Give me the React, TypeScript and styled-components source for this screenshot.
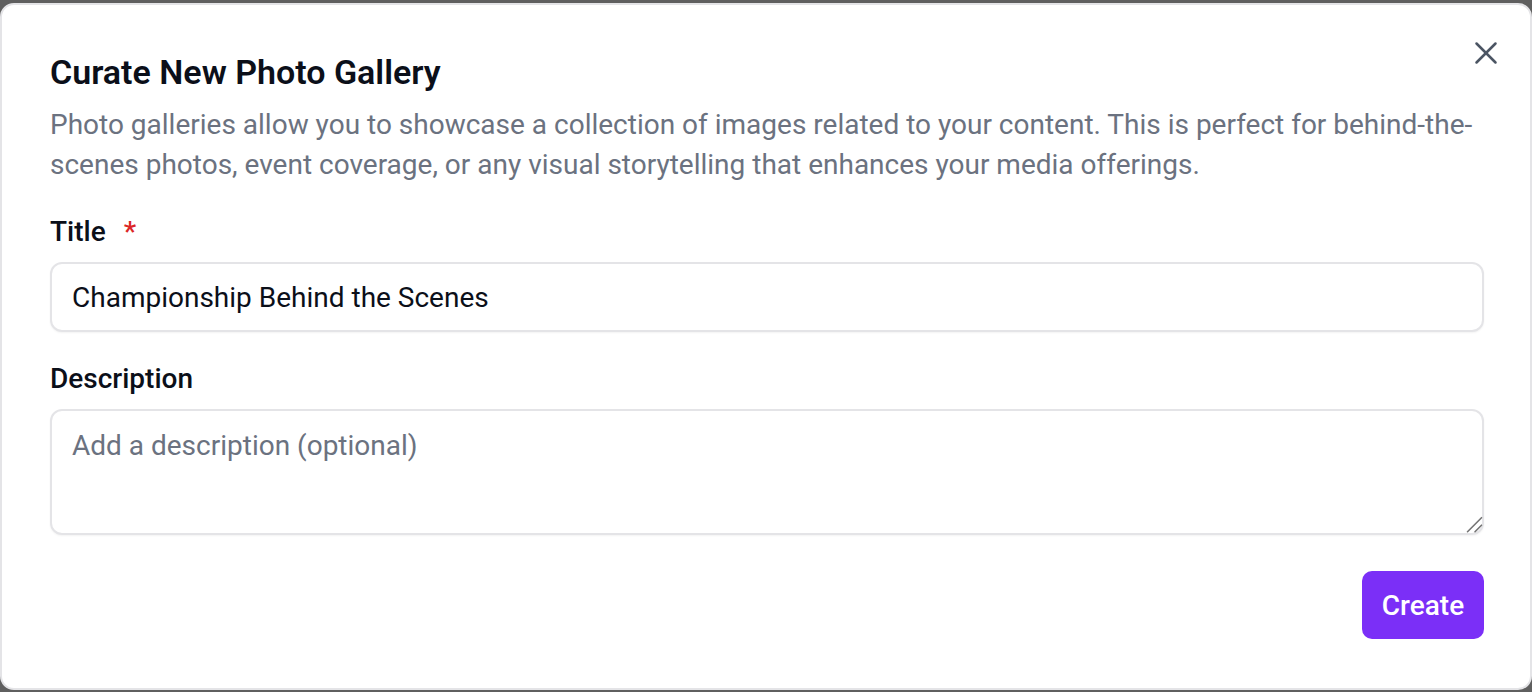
import React from "react";
import styled, { createGlobalStyle } from "styled-components";

const Global = createGlobalStyle`
  html, body { margin: 0; padding: 0; background: #5f5f5f; }
  body { font-family: Roboto, "Noto Sans", "Liberation Sans", sans-serif; }
  * { box-sizing: border-box; }
`;

const Backdrop = styled.div`
  width: 1532px;
  height: 692px;
  padding-top: 3px;
  overflow: hidden;
  background: #5f5f5f;
`;

const Dialog = styled.div`
  position: relative;
  width: 1532px;
  height: 687px;
  background: #ffffff;
  border: 2px solid #e4e4e7;
  border-radius: 14px;
  padding: 49px 46px 46px 48px;
  display: flex;
  flex-direction: column;
`;

const CloseButton = styled.button`
  position: absolute;
  top: 28px;
  right: 24px;
  width: 40px;
  height: 40px;
  padding: 0;
  border: none;
  background: transparent;
  color: #4b5563;
  display: flex;
  align-items: center;
  justify-content: center;
  cursor: pointer;
`;

const Title = styled.h2`
  margin: 0;
  font-size: 34px;
  line-height: 37px;
  font-weight: 600;
  color: #0b0f19;
`;

const Lead = styled.p`
  margin: 14px 0 0;
  font-size: 28px;
  line-height: 40px;
  color: #6b7280;
`;

const Form = styled.form`
  margin-top: 29px;
  display: flex;
  flex-direction: column;
  gap: 29px;
`;

const Field = styled.div`
  display: flex;
  flex-direction: column;
  gap: 12px;
`;

const Label = styled.label`
  font-size: 28px;
  line-height: 36px;
  font-weight: 500;
  color: #0b0f19;
  display: flex;
  gap: 18px;
`;

const Required = styled.span`
  color: #dc2626;
`;

const Input = styled.input`
  height: 70px;
  width: 100%;
  border: 2px solid #e4e4e7;
  border-radius: 12px;
  padding: 0 20px;
  font-family: inherit;
  font-size: 28px;
  color: #0b0f19;
  outline: none;
  box-shadow: 0 1px 2px rgba(0, 0, 0, 0.05);
`;

const AreaWrap = styled.div`
  position: relative;
  height: 126px;
`;

const TextArea = styled.textarea`
  display: block;
  height: 126px;
  width: 100%;
  border: 2px solid #e4e4e7;
  border-radius: 12px;
  padding: 15px 20px;
  font-family: inherit;
  font-size: 28px;
  line-height: 40px;
  color: #0b0f19;
  outline: none;
  resize: none;
  box-shadow: 0 1px 2px rgba(0, 0, 0, 0.05);
  &::placeholder { color: #6b7280; }
`;

const Grip = styled.svg`
  position: absolute;
  right: 0;
  bottom: 0;
  pointer-events: none;
`;

const Footer = styled.div`
  margin-top: 36px;
  display: flex;
  justify-content: flex-end;
`;

const PrimaryButton = styled.button`
  width: 122px;
  height: 68px;
  border: none;
  border-radius: 10px;
  background: #7b2ff7;
  color: #ffffff;
  font-family: inherit;
  font-size: 28px;
  font-weight: 500;
  cursor: pointer;
`;

export default function App() {
  return (
    <>
      <Global />
      <Backdrop>
        <Dialog>
          <CloseButton aria-label="Close">
            <svg width="38" height="38" viewBox="0 0 24 24" fill="none" stroke="currentColor" strokeWidth="1.6" strokeLinecap="round" strokeLinejoin="round">
              <path d="M18 6 6 18" />
              <path d="m6 6 12 12" />
            </svg>
          </CloseButton>
          <Title>Curate New Photo Gallery</Title>
          <Lead>
            Photo galleries allow you to showcase a collection of images related to your content. This is perfect for behind-the-scenes photos, event coverage, or any visual storytelling that enhances your media offerings.
          </Lead>
          <Form onSubmit={(e) => e.preventDefault()}>
            <Field>
              <Label>
                Title <Required>*</Required>
              </Label>
              <Input defaultValue="Championship Behind the Scenes" />
            </Field>
            <Field>
              <Label>Description</Label>
              <AreaWrap>
                <TextArea placeholder="Add a description (optional)" />
                <Grip width="20" height="20" viewBox="0 0 20 20" fill="none" stroke="#757575" strokeWidth="1.6" strokeLinecap="round">
                  <path d="M3.5 16.7 17.5 2.7" />
                  <path d="M11 16.7 17.5 10.2" />
                </Grip>
              </AreaWrap>
            </Field>
          </Form>
          <Footer>
            <PrimaryButton type="button">Create</PrimaryButton>
          </Footer>
        </Dialog>
      </Backdrop>
    </>
  );
}
